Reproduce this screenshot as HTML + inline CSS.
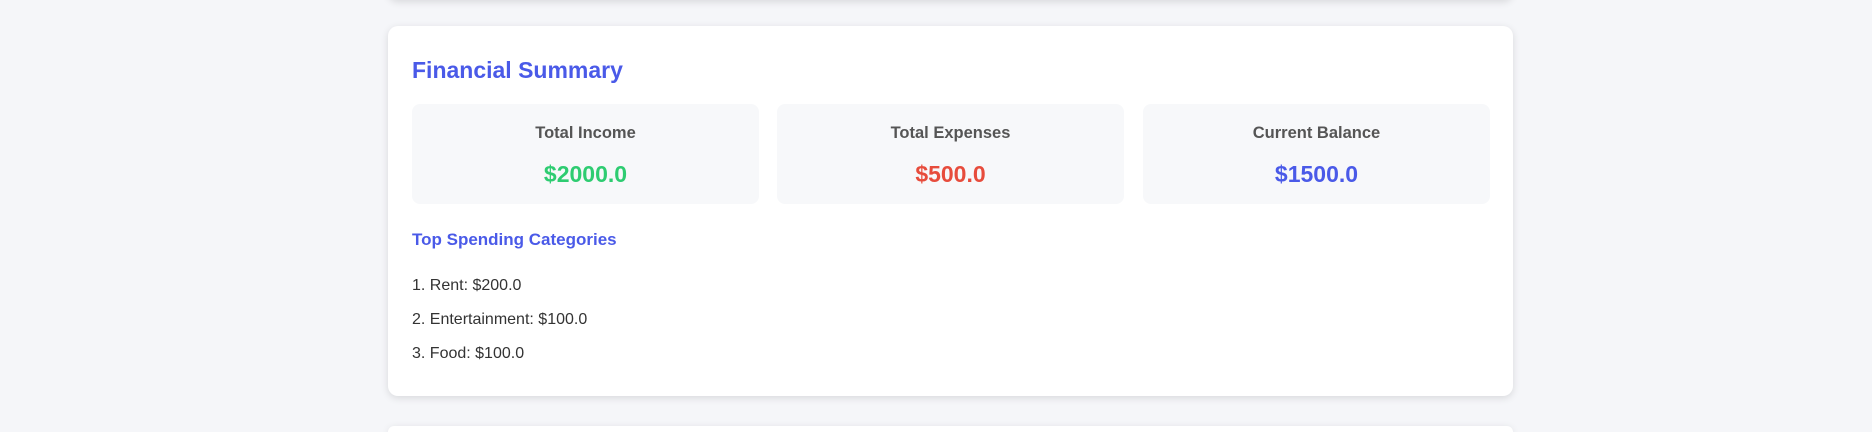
<!DOCTYPE html>
<html style="overflow:hidden;height:432px"><head><meta charset="utf-8"><style>
*{box-sizing:border-box;margin:0;padding:0}
body{width:1872px;height:432px;background:#f5f6f9;font-family:"Liberation Sans",sans-serif;position:relative;overflow:hidden}
.card{position:absolute;left:388px;width:1125px;background:#fff;border-radius:10px;box-shadow:0 2px 8px rgba(0,0,0,0.12)}
h2{position:absolute;left:24px;top:31px;font-size:23px;font-weight:bold;color:#4a5ae8}
.box{position:absolute;top:78px;width:347px;height:100px;background:#f7f8fa;border-radius:8px;text-align:center}
.lab{position:absolute;top:20px;width:100%;font-size:16.5px;font-weight:bold;color:#555}
.val{position:absolute;top:57px;width:100%;font-size:23px;font-weight:bold}
h3{position:absolute;left:24px;top:204px;font-size:17px;font-weight:bold;color:#4a5ae8}
.li{position:absolute;left:24px;font-size:16px;color:#333}
</style></head><body>
<div class="card" style="top:-40px;height:40px"></div>
<div class="card" style="top:26px;height:370px">
<h2>Financial Summary</h2>
<div class="box" style="left:24px"><div class="lab">Total Income</div><div class="val" style="color:#2ecc71">$2000.0</div></div>
<div class="box" style="left:389px"><div class="lab">Total Expenses</div><div class="val" style="color:#e74c3c">$500.0</div></div>
<div class="box" style="left:755px"><div class="lab">Current Balance</div><div class="val" style="color:#4a5ae8">$1500.0</div></div>
<h3>Top Spending Categories</h3>
<div class="li" style="top:251px">1. Rent: $200.0</div>
<div class="li" style="top:285px">2. Entertainment: $100.0</div>
<div class="li" style="top:319px">3. Food: $100.0</div>
</div>
<div class="card" style="top:426px;height:6px;border-radius:10px 10px 0 0"></div>
</body></html>
